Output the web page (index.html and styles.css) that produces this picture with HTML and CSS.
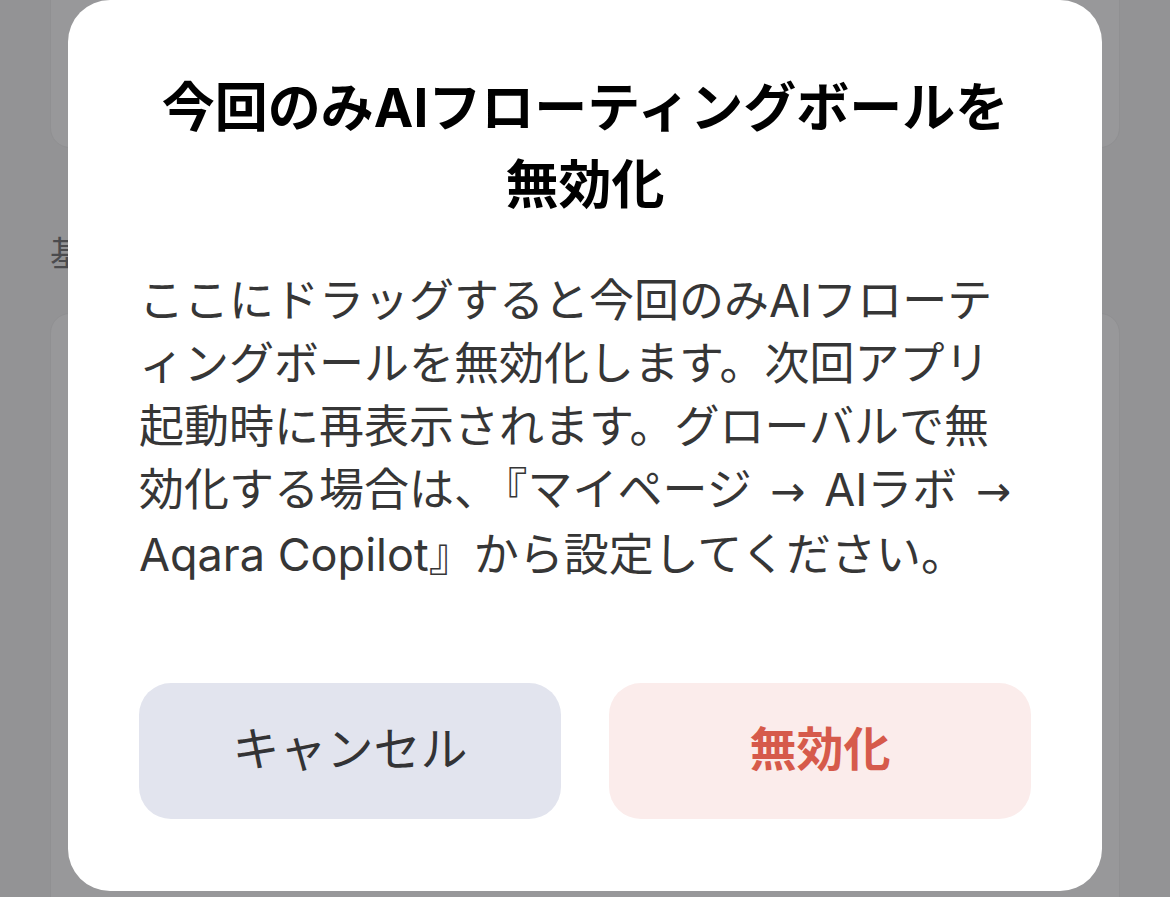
FILE: index.html
```html
<!DOCTYPE html>
<html lang="ja">
<head>
<meta charset="utf-8">
<title>AIフローティングボール</title>
<link rel="stylesheet" href="styles.css">
</head>
<body>
<div class="page">
  <div class="bg-card bg-card-top"></div>
  <div class="section-label">基本設定</div>
  <div class="bg-card bg-card-main"></div>
</div>
<div class="overlay">
  <div class="dialog">
    <h1 class="dialog-title">今回のみAIフローティングボールを<br>無効化</h1>
    <p class="dialog-text">ここにドラッグすると今回のみAIフローテ<br>ィングボールを無効化します。次回アプリ<br>起動時に再表示されます。グローバルで無<br>効化する場合は、<span class="bracket">『</span>マイページ <span class="arrow">→</span> AIラボ <span class="arrow">→</span><br>Aqara Copilot』から設定してください。</p>
    <div class="dialog-actions">
      <button class="btn btn-cancel">キャンセル</button>
      <button class="btn btn-disable">無効化</button>
    </div>
  </div>
</div>
</body>
</html>
```

FILE: styles.css
```css
html, body {
  margin: 0;
  padding: 0;
}
body {
  width: 1170px;
  height: 897px;
  overflow: hidden;
  background: #939395;
  font-family: "Inter", "Noto Sans CJK JP", sans-serif;
  position: relative;
}
.page {
  display: flex;
  flex-direction: column;
  padding: 0 50px;
  height: 897px;
  box-sizing: border-box;
}
.bg-card {
  background: #98989a;
  border: 1px solid #909092;
  border-radius: 20px;
}
.bg-card-top {
  height: 166px;
  margin-top: -20px;
  flex: none;
}
.section-label {
  font-size: 34px;
  color: #4b4b4e;
  line-height: 40px;
  margin-top: 86px;
  height: 79px;
  flex: none;
}
.bg-card-main {
  flex: 1;
  margin-bottom: -30px;
}
.overlay {
  position: absolute;
  left: 0;
  top: 0;
  width: 1170px;
  display: flex;
  justify-content: center;
}
.dialog {
  width: 1034px;
  box-sizing: border-box;
  background: #ffffff;
  border-radius: 42px;
  padding: 70px 71px 72px;
}
.dialog-title {
  margin: 0;
  text-align: center;
  font-size: 53px;
  line-height: 77px;
  font-weight: 700;
  color: #000;
}
.dialog-text {
  margin: 45px 0 0;
  font-size: 45px;
  line-height: 63px;
  color: #363636;
  white-space: nowrap;
}
.bracket {
  margin-left: 6px;
}
.arrow {
  font-family: "DejaVu Sans", sans-serif;
  font-weight: 400;
  font-size: 42px;
  margin: 0 6px;
}
.dialog-actions {
  margin-top: 97px;
  display: grid;
  grid-template-columns: 1fr 1fr;
  gap: 48px;
}
.btn {
  height: 136px;
  border: none;
  border-radius: 32px;
  font-family: "Inter", "Noto Sans CJK JP", sans-serif;
  font-size: 47px;
  line-height: 1;
  padding: 0 0 6px;
}
.btn-cancel {
  background: #e2e4ee;
  color: #333335;
  font-weight: 400;
}
.btn-disable {
  background: #fbeceb;
  color: #d65a4b;
  font-weight: 700;
}
```
